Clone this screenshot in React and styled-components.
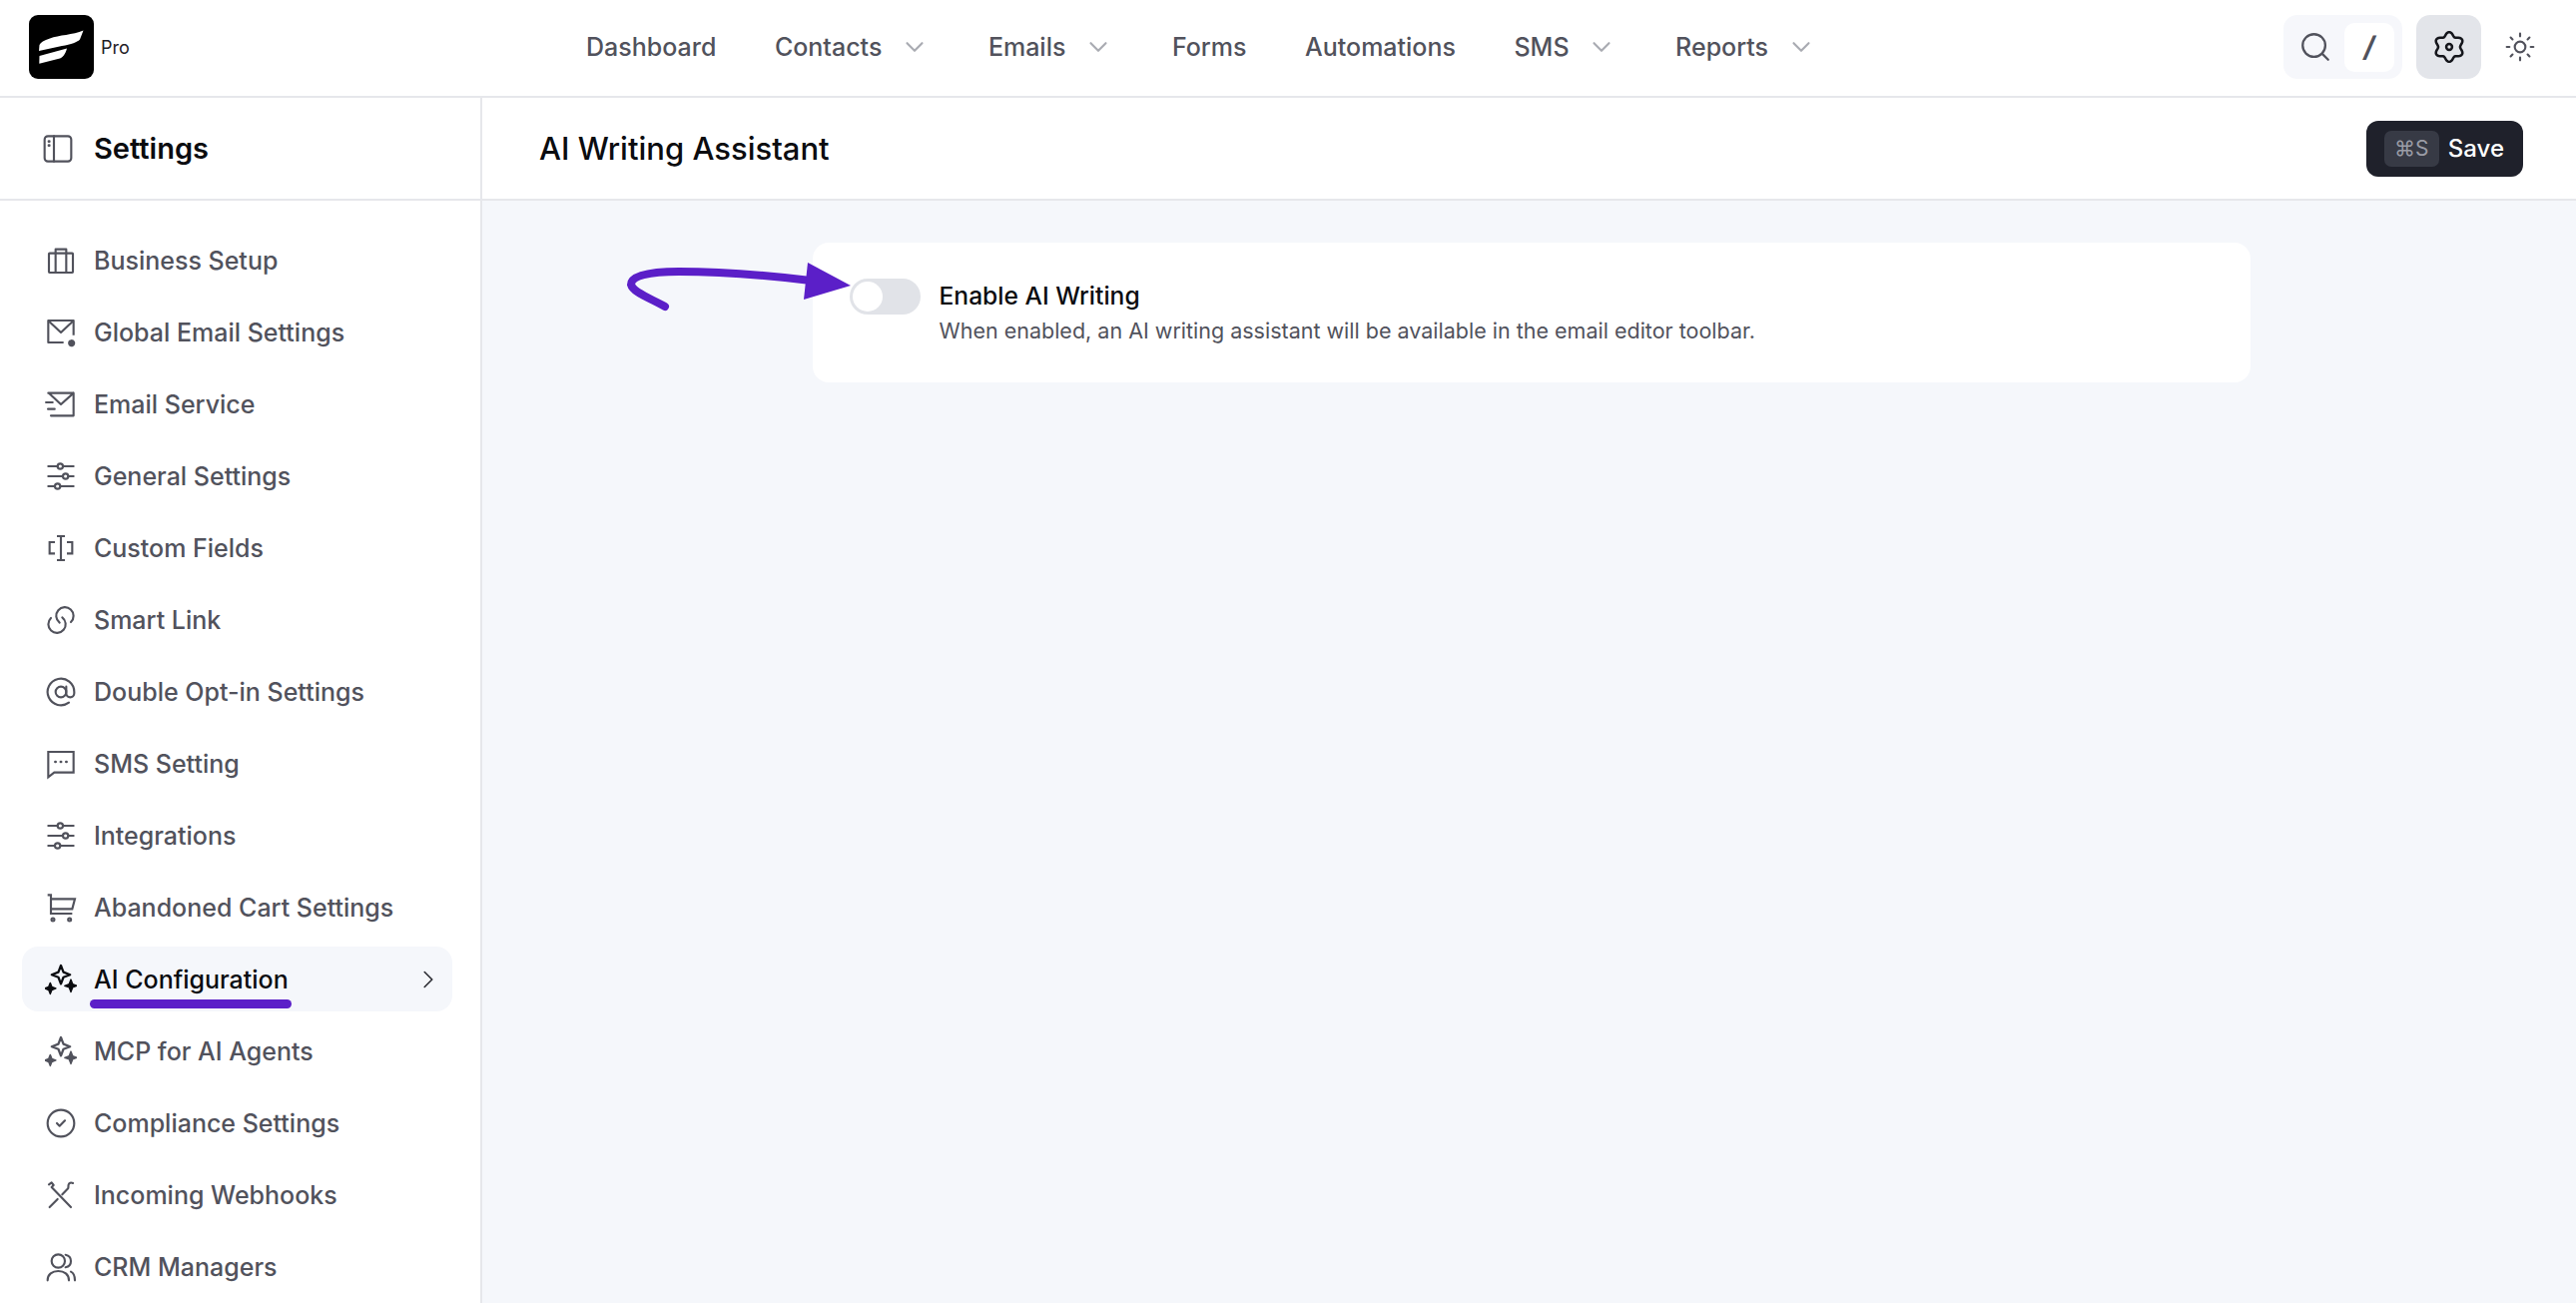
import React from "react";
import styled, { createGlobalStyle } from "styled-components";
import { AtSign, ChevronDown, ChevronRight, CircleCheck, Search, Sun } from "lucide-react";

const GlobalStyle = createGlobalStyle`
  html, body {
    margin: 0;
    padding: 0;
    height: 100%;
    overflow: hidden;
    background: #ffffff;
    font-family: Inter, "Liberation Sans", sans-serif;
  }
  * { box-sizing: border-box; }
`;

const Page = styled.div`
  position: relative;
  display: flex;
  flex-direction: column;
  width: 100%;
  height: 100vh;
  overflow: hidden;
`;

const TopBar = styled.header`
  display: flex;
  align-items: center;
  flex: none;
  height: 98px;
  padding: 0 31px 2px 29px;
  background: #fff;
  border-bottom: 2px solid #e6e7eb;
`;

const Brand = styled.div`
  display: flex;
  align-items: center;
  gap: 7px;
  width: 100px;
  flex: none;
`;

const LogoBox = styled.div`
  width: 65px;
  height: 64px;
  flex: none;
  border-radius: 9px;
  background: #000;
`;

const Pro = styled.span`
  font-size: 18px;
  color: #1f2026;
`;

const Nav = styled.nav`
  display: flex;
  align-items: center;
  gap: 58.5px;
  margin-left: 458px;
`;

const NavItem = styled.a`
  display: flex;
  align-items: center;
  gap: 25px;
  padding-right: ${(props) => (props.$drop ? "8px" : "0")};
  font-size: 25px;
  font-weight: 500;
  color: #51525c;
`;

const NavChevron = styled(ChevronDown)`
  flex: none;
  margin: 0 -7.5px;
  color: #a9abb2;
`;

const Tools = styled.div`
  display: flex;
  align-items: center;
  gap: 14px;
  margin-left: auto;
`;

const SearchBox = styled.div`
  display: flex;
  align-items: center;
  justify-content: space-between;
  width: 119px;
  height: 64px;
  padding: 0 8px 0 15px;
  border-radius: 14px;
  background: #f6f7fb;
  color: #51525c;
`;

const SlashKey = styled.span`
  display: flex;
  align-items: center;
  justify-content: center;
  width: 50px;
  height: 49px;
  border-radius: 10px;
  background: #fff;
  font-size: 28px;
  font-weight: 700;
  font-style: italic;
`;

const IconButton = styled.div`
  display: flex;
  align-items: center;
  justify-content: center;
  width: ${(props) => (props.$active ? "65px" : "50px")};
  height: 64px;
  border-radius: 14px;
  background: ${(props) => (props.$active ? "#e3e5ea" : "transparent")};
  color: ${(props) => (props.$active ? "#15161c" : "#51525c")};
`;

const Body = styled.div`
  display: flex;
  flex: 1;
  min-height: 0;
`;

const Sidebar = styled.aside`
  display: flex;
  flex-direction: column;
  flex: none;
  width: 483px;
  background: #fff;
  border-right: 2px solid #e6e7eb;
`;

const SideHead = styled.div`
  display: flex;
  align-items: center;
  gap: 20px;
  flex: none;
  height: 103px;
  padding-left: 42px;
  border-bottom: 2px solid #e6e7eb;
  font-size: 29px;
  font-weight: 600;
  color: #0b0c10;
`;

const HeadIcon = styled.span`
  display: flex;
  flex: none;
  color: #51525c;
`;

const Menu = styled.ul`
  display: flex;
  flex-direction: column;
  gap: 7px;
  margin: 0;
  padding: 27px 0 0 22px;
  list-style: none;
`;

const Row = styled.li`
  position: relative;
  display: flex;
  align-items: center;
  flex: none;
  gap: 17px;
  width: 431px;
  height: 65px;
  padding: 0 17px 0 23px;
  border-radius: 16px;
  font-size: 25px;
  font-weight: 500;
  background: ${(props) => (props.$active ? "#f5f7fb" : "transparent")};
  color: ${(props) => (props.$active ? "#0b0c10" : "#51525c")};
`;

const RowIcon = styled.span`
  display: flex;
  align-items: center;
  justify-content: center;
  width: 32px;
  height: 32px;
  flex: none;
  color: ${(props) => (props.$active ? "#0b0c10" : "#51525c")};
`;

const RowCaret = styled.span`
  display: flex;
  margin: 0 -8px 0 auto;
  color: #2b2c33;
`;

const Underline = styled.span`
  position: absolute;
  left: 68px;
  bottom: 3px;
  width: 202px;
  height: 9px;
  border-radius: 5px;
  background: #5b1fc8;
`;

const Main = styled.main`
  display: flex;
  flex-direction: column;
  flex: 1;
  min-width: 0;
  background: #f5f7fb;
`;

const MainHead = styled.div`
  display: flex;
  align-items: center;
  justify-content: space-between;
  flex: none;
  height: 103px;
  padding: 0 53px 0 57px;
  background: #fff;
  border-bottom: 2px solid #e6e7eb;
`;

const Title = styled.h1`
  margin: 0;
  font-size: 31px;
  font-weight: 500;
  color: #0b0c10;
`;

const SaveButton = styled.button`
  display: flex;
  align-items: center;
  gap: 9px;
  height: 56px;
  padding: 0 19px 0 18px;
  border: 0;
  border-radius: 12px;
  background: #1f212b;
  color: #fff;
  font-family: inherit;
  font-size: 24px;
  font-weight: 500;
`;

const Kbd = styled.span`
  display: flex;
  align-items: center;
  justify-content: center;
  width: 55px;
  height: 36px;
  border-radius: 7px;
  background: #373a45;
  color: #9a9ca6;
  font-size: 21px;
  font-weight: 400;
`;

const Content = styled.div`
  padding: 42px 0 0 4px;
`;

const Card = styled.section`
  display: flex;
  align-items: flex-start;
  gap: 19px;
  width: 1440px;
  margin: 0 auto;
  padding: 36px 37px 34px;
  border-radius: 16px;
  background: #fff;
`;

const Toggle = styled.span`
  display: flex;
  align-items: center;
  width: 71px;
  height: 36px;
  flex: none;
  padding: 3px;
  border-radius: 18px;
  background: #e1e3e8;
`;

const Knob = styled.span`
  width: 30px;
  height: 30px;
  border-radius: 50%;
  background: #fff;
`;

const CardTitle = styled.div`
  font-size: 24.6px;
  line-height: 34px;
  font-weight: 500;
  color: #0b0c10;
`;

const CardText = styled.div`
  font-size: 21.5px;
  line-height: 36px;
  color: #51525c;
`;

const ArrowMark = styled.svg`
  position: absolute;
  left: 620px;
  top: 255px;
`;

const Logo = () => (
  <LogoBox>
    <svg width="65" height="64" viewBox="0 0 65 64">
      <path d="M54.5 15.5C44 20 30 20 21 23.5 15 25.5 11.5 27.5 10.5 30L10 36 33 31C42 29.5 49 27 51 24.5Z" fill="#fff" />
      <path d="M38 33.5L10.5 41 10.3 48.7 31 43.5C34 42.5 36.5 39 38 33.5Z" fill="#fff" />
    </svg>
  </LogoBox>
);

const Stroke = ({ children, size = 32 }) => (
  <svg width={size} height={size} viewBox="0 0 24 24" fill="none" stroke="currentColor" strokeWidth="1.6" strokeLinecap="round" strokeLinejoin="round">
    {children}
  </svg>
);

const PanelIcon = () => (
  <Stroke>
    <rect x="2" y="2.5" width="20" height="19" rx="2.5" />
    <path d="M9 2.5v19" />
    <path d="M5.2 6.5h.3M5.2 9.5h.3" strokeWidth="2" />
  </Stroke>
);

const CaseIcon = () => (
  <Stroke>
    <rect x="3" y="6.5" width="18" height="14.5" rx="0.5" />
    <path d="M8 6.5V21M16 6.5V21M8 6.5V3.5h8v3" strokeLinecap="butt" />
  </Stroke>
);

const MailGearIcon = () => (
  <Stroke>
    <path d="M14 19.5H2.5V3h19v11" strokeLinecap="butt" />
    <path d="M3 3.5L12 12l9-8.5" />
    <circle cx="20" cy="20" r="2" fill="currentColor" strokeWidth="1.4" strokeDasharray="1.5 0.7" />
  </Stroke>
);

const MailSendIcon = () => (
  <Stroke>
    <path d="M2.5 3.5H21.5V20.5H4.5M3 3.5L12 12 21.5 3.5" />
    <path d="M.8 10.5h5M2.3 15.5h5" />
  </Stroke>
);

const SlidersIcon = () => (
  <Stroke>
    <path d="M2.5 4.5h7M13.5 4.5h8M2.5 12h11M17.5 12h4M2.5 19.5h5M11.5 19.5h10" />
    <circle cx="11.5" cy="4.5" r="2" />
    <circle cx="15.5" cy="12" r="2" />
    <circle cx="9.5" cy="19.5" r="2" />
  </Stroke>
);

const FieldIcon = () => (
  <Stroke>
    <path d="M7.5 7.5H3.5v8.5h4M16.5 7.5h4v8.5h-4M9 3h6M9 21h6M12 3v18" strokeLinecap="butt" strokeLinejoin="miter" />
  </Stroke>
);

const LinkIcon = () => (
  <Stroke>
    <path d="M11 14A6.5 6.5 0 1 1 19.5 13.5" />
    <path d="M13 10A6.5 6.5 0 1 1 4.5 10.5" />
  </Stroke>
);

const ChatIcon = () => (
  <Stroke>
    <path d="M2.5 3h19v15.5H7L2.5 22Z" strokeLinejoin="miter" />
    <path d="M7.8 10.5h.2M11.9 10.5h.2M16 10.5h.2" strokeWidth="2" />
  </Stroke>
);

const CartIcon = () => (
  <Stroke>
    <path d="M2 2.5H4.5V16.5H20.5M4.5 5.5H22.5L20.5 13H4.5" strokeLinecap="butt" strokeLinejoin="miter" />
    <circle cx="6" cy="21" r="1.1" />
    <circle cx="18.5" cy="21" r="1.1" />
  </Stroke>
);

const SparkIcon = () => (
  <Stroke>
    <path d="M12 1.5l1.9 5 5 1.9-5 1.900-1.900 5-1.900-5-5-1.900 5-1.900Z" strokeWidth="1.7" />
    <path d="M4 14.500l1.200 3 3 1.200-3 1.200-1.200 3-1.200-3-3-1.200 3-1.200Z" fill="currentColor" strokeWidth="1" />
    <path d="M19.500 12l1.300 3.400 3.400 1.300-3.400 1.300-1.300 3.400-1.300-3.400-3.400-1.300 3.400-1.300Z" fill="currentColor" strokeWidth="1" />
  </Stroke>
);

const ToolsIcon = () => (
  <Stroke>
    <path d="M3 4l2-1.500 1.500 2-1.500 1.500 14.500 15M21 3c-1.500-.8-3-.2-3.300 1.200-.3 1.300.2 2.300-.5 3L13 11.500M9.500 15L3.500 21" />
  </Stroke>
);

const UsersIcon = () => (
  <Stroke>
    <circle cx="10" cy="7.500" r="5" />
    <path d="M2 22c0-4.500 3.500-7 8-7s8 2.500 8 7" />
    <path d="M15.500 2.800c2.500.5 4 2.400 4 4.700s-1.500 4.200-4 4.700M19.500 15.500c2 1 3 3.300 3 6.500" />
  </Stroke>
);

// cog with six soft lobes, closest to the outline in the reference
const cogPath = Array.from({ length: 73 }, (_, i) => {
  const a = (i / 72) * Math.PI * 2;
  const r = 9.7 + 1.5 * Math.cos(6 * a);
  return `${i ? "L" : "M"}${(12 + r * Math.sin(a)).toFixed(2)} ${(12 - r * Math.cos(a)).toFixed(2)}`;
}).join("") + "Z";

const CogIcon = () => (
  <Stroke>
    <path d={cogPath} strokeWidth="1.9" />
    <circle cx="12" cy="12" r="2.2" strokeWidth="1.9" />
  </Stroke>
);

const menu = [
  { label: "Business Setup", icon: <CaseIcon /> },
  { label: "Global Email Settings", icon: <MailGearIcon /> },
  { label: "Email Service", icon: <MailSendIcon /> },
  { label: "General Settings", icon: <SlidersIcon /> },
  { label: "Custom Fields", icon: <FieldIcon /> },
  { label: "Smart Link", icon: <LinkIcon /> },
  { label: "Double Opt-in Settings", icon: <AtSign size={32} strokeWidth={1.6} /> },
  { label: "SMS Setting", icon: <ChatIcon /> },
  { label: "Integrations", icon: <SlidersIcon /> },
  { label: "Abandoned Cart Settings", icon: <CartIcon /> },
  { label: "AI Configuration", icon: <SparkIcon />, active: true },
  { label: "MCP for AI Agents", icon: <SparkIcon /> },
  { label: "Compliance Settings", icon: <CircleCheck size={32} strokeWidth={1.6} /> },
  { label: "Incoming Webhooks", icon: <ToolsIcon /> },
  { label: "CRM Managers", icon: <UsersIcon /> },
];

const navItems = [
  { label: "Dashboard" },
  { label: "Contacts", drop: true },
  { label: "Emails", drop: true },
  { label: "Forms" },
  { label: "Automations" },
  { label: "SMS", drop: true },
  { label: "Reports", drop: true },
];

export default function App() {
  return (
    <Page>
      <GlobalStyle />
      <TopBar>
        <Brand>
          <Logo />
          <Pro>Pro</Pro>
        </Brand>
        <Nav>
          {navItems.map((item) => (
            <NavItem key={item.label} $drop={item.drop}>
              {item.label}
              {item.drop && <NavChevron size={30} strokeWidth={1.7} />}
            </NavItem>
          ))}
        </Nav>
        <Tools>
          <SearchBox>
            <Search size={34} strokeWidth={1.6} />
            <SlashKey>/</SlashKey>
          </SearchBox>
          <IconButton $active>
            <CogIcon />
          </IconButton>
          <IconButton>
            <Sun size={32} strokeWidth={1.6} />
          </IconButton>
        </Tools>
      </TopBar>
      <Body>
        <Sidebar>
          <SideHead>
            <HeadIcon>
              <PanelIcon />
            </HeadIcon>
            Settings
          </SideHead>
          <Menu>
            {menu.map((item) => (
              <Row key={item.label} $active={item.active}>
                <RowIcon $active={item.active}>{item.icon}</RowIcon>
                {item.label}
                {item.active && (
                  <>
                    <RowCaret>
                      <ChevronRight size={30} strokeWidth={1.3} />
                    </RowCaret>
                    <Underline />
                  </>
                )}
              </Row>
            ))}
          </Menu>
        </Sidebar>
        <Main>
          <MainHead>
            <Title>AI Writing Assistant</Title>
            <SaveButton>
              <Kbd>⌘S</Kbd>
              Save
            </SaveButton>
          </MainHead>
          <Content>
            <Card>
              <Toggle>
                <Knob />
              </Toggle>
              <div>
                <CardTitle>Enable AI Writing</CardTitle>
                <CardText>When enabled, an AI writing assistant will be available in the email editor toolbar.</CardText>
              </div>
            </Card>
          </Content>
        </Main>
      </Body>
      <ArrowMark width="240" height="60" viewBox="620 255 240 60">
        <path d="M666 307C652 299 634 293 632 285 632 276 650 272 680 272 720 272 770 276 812 281" fill="none" stroke="#5b1fc8" strokeWidth="8" strokeLinecap="round" />
        <path d="M809 263L852 286 805 300Z" fill="#5b1fc8" />
      </ArrowMark>
    </Page>
  );
}
